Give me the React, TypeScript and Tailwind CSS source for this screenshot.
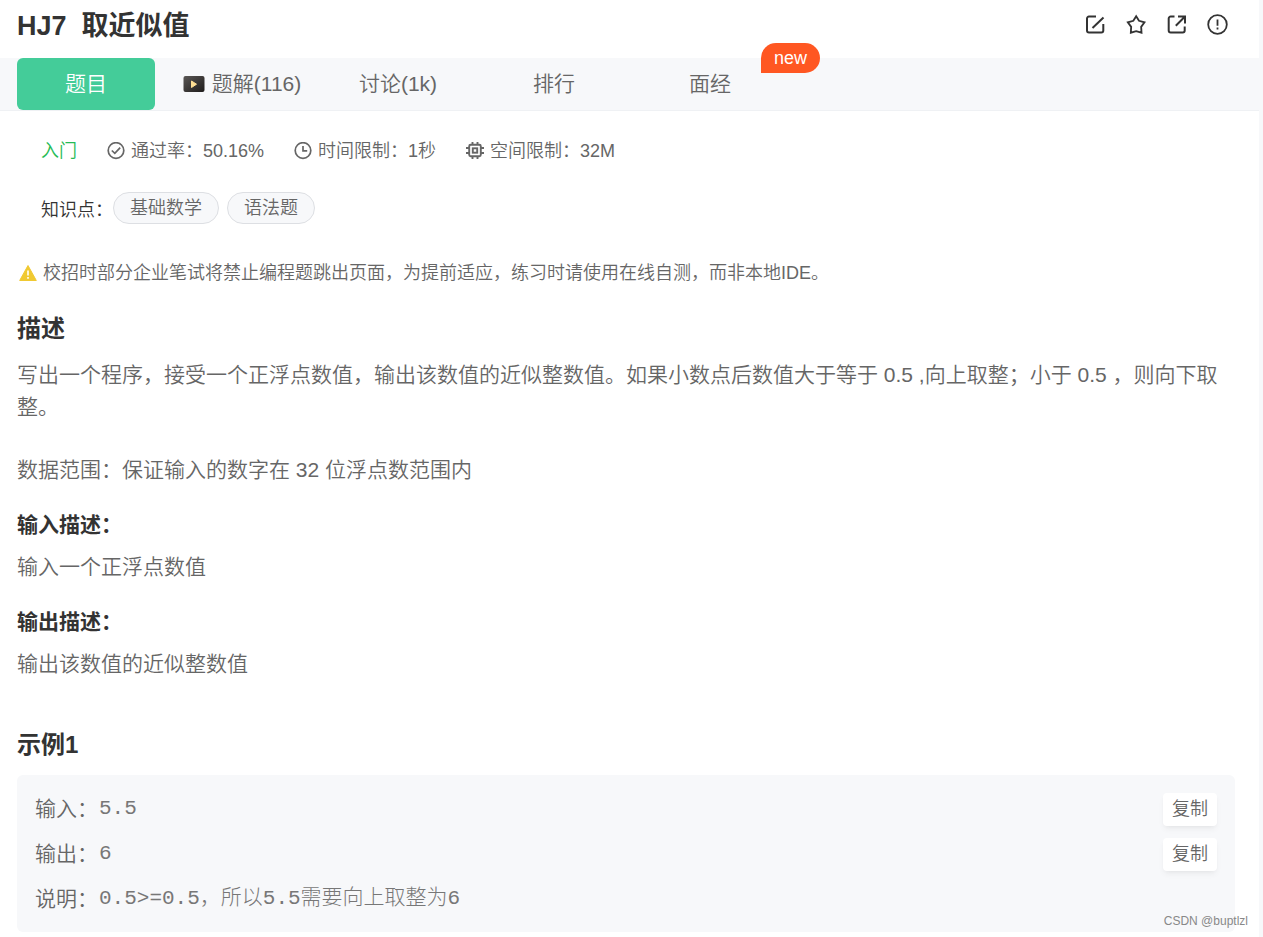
import React from 'react';

interface Tab {
  label: string;
  active?: boolean;
  video?: boolean;
  badge?: string;
}

interface ExampleRow {
  label: string;
  value: string;
  copyable?: boolean;
}

const tabs: Tab[] = [
  { label: '题目', active: true },
  { label: '题解(116)', video: true },
  { label: '讨论(1k)' },
  { label: '排行' },
  { label: '面经', badge: 'new' },
];

const tags = ['基础数学', '语法题'];

const exampleRows: ExampleRow[] = [
  { label: '输入：', value: '5.5', copyable: true },
  { label: '输出：', value: '6', copyable: true },
  { label: '说明：', value: '0.5>=0.5，所以5.5需要向上取整为6' },
];

const EditIcon = () => (
  <svg width="21" height="21" viewBox="0 0 21 21" fill="none" stroke="currentColor" strokeWidth="2">
    <path d="M12 2.5H5a2 2 0 0 0-2 2v12a2 2 0 0 0 2 2h12.300a2 2 0 0 0 2-2V10" />
    <path d="M8.500 14 19.500 3.500" />
  </svg>
);

const StarIcon = () => (
  <svg width="21" height="21" viewBox="0 0 63 63" fill="none" stroke="currentColor" strokeWidth="5.5">
    <path d="M33.500 7 42 20.500 58.500 25 48.500 38.500 49.500 56 33.500 51.500 17.500 56 18.500 38.500 8.500 25 25 20.500Z" />
  </svg>
);

const ShareIcon = () => (
  <svg width="21" height="21" viewBox="0 0 21 21" fill="none" stroke="currentColor" strokeWidth="2">
    <path d="M8.500 2.500H4.700a2 2 0 0 0-2 2v12a2 2 0 0 0 2 2h12a2 2 0 0 0 2-2V12.500" />
    <path d="M12 2.500h7v7M19 2.500 9.800 11.800" />
  </svg>
);

const AlertIcon = () => (
  <svg width="21" height="21" viewBox="0 0 21 21" fill="none" stroke="currentColor" strokeWidth="1.800">
    <circle cx="10.500" cy="10.500" r="9.300" />
    <path d="M10.500 5.500v6.200M10.500 13.500v2" />
  </svg>
);

const VideoIcon = () => (
  <svg width="22" height="18" viewBox="0 0 22 18">
    <defs>
      <linearGradient id="video-bg" x1="0" y1="0" x2="1" y2="1">
        <stop offset="0" stopColor="#5a5755" />
        <stop offset="1" stopColor="#1f1c1b" />
      </linearGradient>
    </defs>
    <rect x="0.500" y="1" width="21" height="16" rx="2" fill="url(#video-bg)" />
    <path d="M8.500 6v6.500l5-3.300z" fill="#ffdf94" stroke="#ffdf94" strokeLinejoin="round" />
  </svg>
);

const PassIcon = () => (
  <svg width="18" height="18" viewBox="0 0 18 18" fill="none" stroke="currentColor" strokeWidth="1.700">
    <circle cx="9" cy="8.500" r="7.800" />
    <path d="m4.800 8.500 3 2.800 5.400-5.600" />
  </svg>
);

const ClockIcon = () => (
  <svg width="18" height="18" viewBox="0 0 18 18" fill="none" stroke="currentColor" strokeWidth="1.700">
    <circle cx="9" cy="8.500" r="7.800" />
    <path d="M9 4v4.800h4.200" />
  </svg>
);

const ChipIcon = () => (
  <svg width="18" height="18" viewBox="0 0 18 18" fill="none" stroke="currentColor" strokeWidth="1.900">
    <rect x="3.200" y="2.700" width="11.600" height="11.600" rx="1.500" />
    <rect x="6.800" y="6.300" width="4.400" height="4.400" />
    <path d="M6.500 0v3M11.500 0v3M6.500 14v3M11.500 14v3M0 6h3M0 11h3M15 6h3M15 11h3" />
  </svg>
);

const WarningIcon = () => (
  <svg width="18" height="18" viewBox="0 0 18 18" className="shrink-0">
    <path d="M9 1.500 17.300 16.500H.700Z" fill="#f0c932" stroke="#f0c932" strokeLinejoin="round" />
    <path d="M9 6.500v5M9 13v1.800" stroke="#fff" strokeWidth="1.600" />
  </svg>
);

const actions = [
  { label: '编辑', icon: <EditIcon /> },
  { label: '收藏', icon: <StarIcon /> },
  { label: '分享', icon: <ShareIcon /> },
  { label: '反馈', icon: <AlertIcon /> },
];

const limits = [
  { icon: <PassIcon />, text: '通过率：50.16%' },
  { icon: <ClockIcon />, text: '时间限制：1秒' },
  { icon: <ChipIcon />, text: '空间限制：32M' },
];

const Header = () => (
  <header className="flex h-12 items-center justify-between pl-[17px] pr-[31px] text-[#333]">
    <h1 className="pt-1 text-[27px] leading-8 font-bold whitespace-pre">{'HJ7  取近似值'}</h1>
    <div className="flex items-center gap-5">
      {actions.map((action) => (
        <button key={action.label} type="button" aria-label={action.label}>
          {action.icon}
        </button>
      ))}
    </div>
  </header>
);

const TabBar = () => (
  <nav className="mt-[10px] flex gap-[18px] border-b border-[#eff1f4] bg-[#f7f8fa] pl-[17px]">
    {tabs.map((tab) => (
      <button
        key={tab.label}
        type="button"
        className={`relative flex h-[52px] w-[138px] items-center justify-center gap-[7px] rounded-md text-[21px] ${
          tab.active ? 'bg-[#44cc99] text-white' : 'text-[#666]'
        }`}
      >
        {tab.video && <VideoIcon />}
        {tab.label}
        {tab.badge && (
          <span className="absolute -top-[15px] left-[120px] flex h-[30px] w-[59px] items-center justify-center rounded-full rounded-bl-none bg-[#ff5722] text-lg text-white">
            {tab.badge}
          </span>
        )}
      </button>
    ))}
  </nav>
);

const Example = () => (
  <section className="mt-[49px]">
    <h2 className="text-2xl leading-8 font-bold text-[#333]">示例1</h2>
    <div className="mt-[14px] flex flex-col gap-3 rounded-md bg-[#f7f8fa] px-[18px] pt-[18px] pb-4">
      {exampleRows.map((row) => (
        <div key={row.label} className="flex h-[33px] items-center text-[21px]">
          <span className="pb-[2px]">{row.label}</span>
          <code className="ml-px flex-1 pb-[2px] font-['Liberation_Mono','Noto_Sans_CJK_SC',monospace] font-light text-[#777]">
            {row.value}
          </code>
          {row.copyable && (
            <button type="button" className="h-[33px] w-[54px] rounded-sm bg-white pb-[2px] text-lg shadow-md shadow-black/5">
              复制
            </button>
          )}
        </div>
      ))}
    </div>
  </section>
);

const App: React.FC = () => {
  return (
    <div className="relative min-h-screen border-r-4 border-[#f7f8fa] bg-white font-['Liberation_Sans','Noto_Sans_CJK_SC',sans-serif] font-[350] text-[#666]">
      <Header />
      <TabBar />

      <div className="flex items-center pt-7 pl-[41px] text-lg leading-6">
        <span className="text-[#25bb55]">入门</span>
        {limits.map((limit) => (
          <span key={limit.text} className="ml-[30px] flex items-center gap-[6px]">
            {limit.icon}
            {limit.text}
          </span>
        ))}
      </div>

      <div className="mt-[29px] flex items-center pl-[41px] text-lg">
        <span className="pt-1 text-[#333]">知识点：</span>
        {tags.map((tag) => (
          <a key={tag} href="#" className="mr-2 flex h-8 items-center rounded-full border border-[#dddfe3] bg-[#f7f8fa] px-4">
            {tag}
          </a>
        ))}
      </div>

      <main className="pr-6 pb-[5px] pl-[17px]">
        <div className="mt-[37px] flex items-center gap-[6px] pl-[2px] text-lg leading-6">
          <WarningIcon />
          <span>校招时部分企业笔试将禁止编程题跳出页面，为提前适应，练习时请使用在线自测，而非本地IDE。</span>
        </div>

        <section className="mt-7 text-[21px] leading-8">
          <h2 className="text-2xl leading-8 font-bold text-[#333]">描述</h2>
          <p className="mt-[14px]">
            写出一个程序，接受一个正浮点数值，输出该数值的近似整数值。如果小数点后数值大于等于 0.5 ,向上取整；小于 0.5 ，则向下取整。
          </p>
          <p className="mt-[31px]">数据范围：保证输入的数字在 32 位浮点数范围内</p>

          <h3 className="mt-[23px] font-bold text-[#333]">输入描述：</h3>
          <p className="mt-[10px]">输入一个正浮点数值</p>

          <h3 className="mt-[23px] font-bold text-[#333]">输出描述：</h3>
          <p className="mt-[10px]">输出该数值的近似整数值</p>
        </section>

        <Example />
      </main>

      <span className="absolute right-[11px] bottom-2 text-xs text-[#888]">CSDN @buptlzl</span>
    </div>
  );
};

export default App;
